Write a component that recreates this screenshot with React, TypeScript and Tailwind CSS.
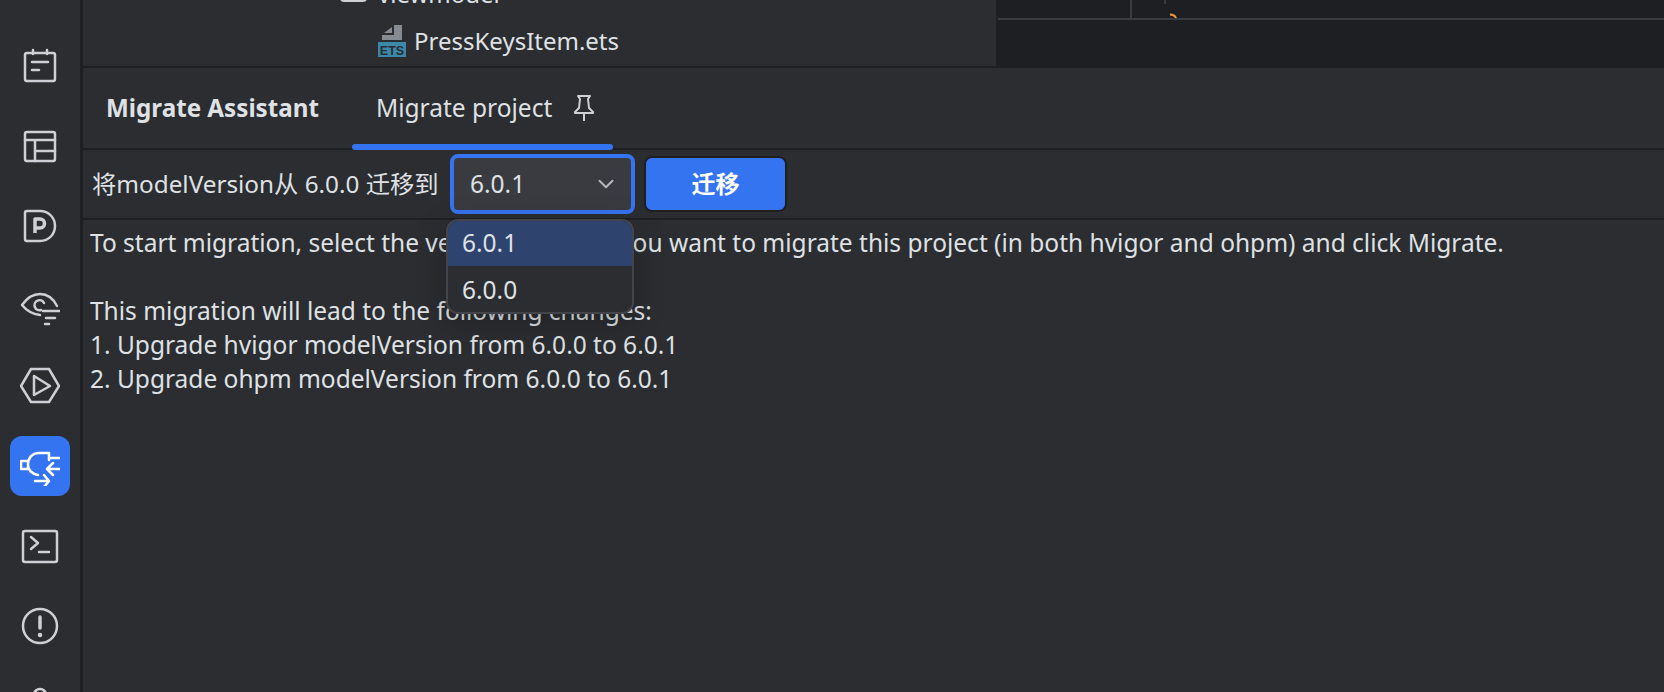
import { ChevronDown } from "lucide-react";

const font = { fontFamily: '"Noto Sans", "Noto Sans CJK SC", sans-serif' };

function RailIcon({ children, active }: { children: React.ReactNode; active?: boolean }) {
  return (
    <div className={`w-[60px] h-[60px] shrink-0 rounded-xl flex items-center justify-center ${active ? "bg-[#3574f0] text-white" : "text-[#ced0d6]"}`}>
      <svg width="40" height="40" viewBox="0 0 40 40" fill="none" stroke="currentColor" strokeWidth="2.5" strokeLinecap="round" strokeLinejoin="round">
        {children}
      </svg>
    </div>
  );
}

function Rail() {
  return (
    <div className="w-[80px] shrink-0 h-full overflow-hidden flex flex-col items-center pt-[36px] gap-[20px] bg-[#2b2d30]">
      <RailIcon>
        <rect x="5" y="7" width="30" height="28" rx="2" />
        <path d="M13 4v4M27 4v4M12 16h16M12 24h7" />
      </RailIcon>
      <RailIcon>
        <rect x="5" y="6" width="30" height="29" rx="2" />
        <path d="M5 14h30M15 14v21M15 25h20" />
      </RailIcon>
      <RailIcon>
        <path d="M7 5h13c9 0 15 7 15 15s-6 15-15 15H7a2 2 0 0 1-2-2V7a2 2 0 0 1 2-2z" />
        <path d="M15 27V13h5a4.500 4.500 0 0 1 0 9h-5" strokeWidth="3.5" strokeLinecap="butt" />
      </RailIcon>
      <RailIcon>
        <path d="M20 29C12 28 6 24 2 19 7 12 13 8 20 8c7 0 13 4 17 12" />
        <path d="M24 17a5 5 0 1 0-3 7" />
        <path d="M23 25h17M26 32h9M25 38h4" />
      </RailIcon>
      <RailIcon>
        <path d="M11 3h18l10 17-10 16H11L1 20z" />
        <path d="M14 10l16 10-16 9z" />
      </RailIcon>
      <RailIcon active>
        <path d="M8 15H1v8h7zM28 7h-9C12 7 8 12 8 19c0 5 4 9 10 10M29 7v7M29 12h11M30 23h10M33 17l-6 6 6 6M15 35h14M24 29l5 6-5 6" />
      </RailIcon>
      <RailIcon>
        <rect x="3" y="5" width="34" height="31" rx="2" />
        <path d="M11 11l7 6-7 6M19 26h10" />
      </RailIcon>
      <RailIcon>
        <circle cx="20" cy="20" r="17" />
        <path d="M20 11v11" strokeWidth="3.5" />
        <path d="M20 29v.1" strokeWidth="4.5" />
      </RailIcon>
      <RailIcon>
        <circle cx="20" cy="9" r="6" />
      </RailIcon>
    </div>
  );
}

function ProjectTree() {
  return (
    <div className="flex h-[66px] shrink-0">
      <div className="w-[913px] shrink-0 bg-[#2b2d30] overflow-hidden">
        <div className="flex items-center gap-[11px] pl-[257px] h-[20px] -mt-[16px] text-[24px] text-[#dfe1e5]">
          <span className="w-[27px] h-[16px] border-2 border-[#ced0d6] rounded-sm" />
          <span>viewmodel</span>
        </div>
        <div className="flex items-center gap-[8px] pl-[295px] pt-[20px] text-[24px] leading-[34px] text-[#dfe1e5]">
          <svg width="28" height="32" viewBox="0 0 28 32" className="shrink-0">
            <path d="M16 0h8v15H4v-5h12zM6 8l8-6v6z" fill="#868a91" />
            <rect x="0" y="17" width="28" height="15" fill="#3a88aa" />
            <text x="14" y="30" textAnchor="middle" fontSize="12.500" fontWeight="700" fill="#2b2d30" fontFamily="Liberation Sans, sans-serif">ETS</text>
          </svg>
          <span>PressKeysItem.ets</span>
        </div>
      </div>
      <div className="flex-1 bg-[#1e1f22] relative">
        <div className="h-[20px] ml-[2px] border-b-2 border-[#393b40]" />
        <div className="absolute left-[134px] top-0 w-[2px] h-[18px] bg-[#393b40]" />
        <div className="absolute left-[168px] top-0 w-[2px] h-[4px] bg-[#393b40]" />
        <svg width="8" height="5" viewBox="0 0 8 5" className="absolute left-[174px] top-[13px]">
          <path d="M0 1.500c3 0 5 1 6 3.500" fill="none" stroke="#e8963a" strokeWidth="2" />
        </svg>
      </div>
    </div>
  );
}

function Tabs() {
  return (
    <div className="h-[84px] shrink-0 flex items-stretch border-y-2 border-[#1e1f22] pl-[23px] text-[24.500px]">
      <div className="flex items-center font-bold text-[#dfe1e5] text-[24.200px] w-[246px]">Migrate Assistant</div>
      <div className="relative flex items-center gap-[20px] w-[261px] pl-[24px] text-[#dfe1e5]">
        <span>Migrate project</span>
        <svg width="24" height="28" viewBox="0 0 24 28" fill="none" stroke="#ced0d6" strokeWidth="2" strokeLinejoin="round">
          <path d="M6 2h12l-2 3 1 9 4 4v1H3v-1l4-4 1-9z" />
          <path d="M12 19v8" />
        </svg>
        <div className="absolute left-0 right-0 -bottom-[2px] h-[6px] rounded-full bg-[#3574f0]" />
      </div>
    </div>
  );
}

function Toolbar() {
  return (
    <div className="h-[70px] shrink-0 flex items-center pl-[9px] border-b-2 border-[#1e1f22] text-[24.500px] text-[#dfe1e5]">
      <span className="whitespace-nowrap w-[358px] text-[24.300px]">将modelVersion从 6.0.0 迁移到</span>
      <div className="relative">
        <div className="w-[185px] h-[60px] rounded-lg border-4 border-[#3574f0] bg-[#393b40] flex items-center justify-between pl-[16px] pr-[12px]">
          <span>6.0.1</span>
          <ChevronDown size={26} strokeWidth={1.8} className="text-[#b4b8bf]" />
        </div>
        <div className="absolute left-[-4px] top-[65px] w-[188px] h-[95px] rounded-xl border-2 border-[#43454a] bg-[#2b2d30] overflow-hidden z-10 shadow-[0_8px_30px_rgba(0,0,0,0.25)]">
          <div className="h-[45px] bg-[#2e436e] pl-[14px] flex items-center">6.0.1</div>
          <div className="h-[48px] pl-[14px] flex items-center">6.0.0</div>
        </div>
      </div>
      <button className="ml-[9px] w-[143px] h-[56px] rounded-lg bg-[#3574f0] border-2 border-[#1e1f22] text-white font-bold text-[24px]">迁移</button>
    </div>
  );
}

export default function App() {
  return (
    <div className="w-[1664px] h-[692px] overflow-hidden flex bg-[#2b2d30]" style={font}>
      <Rail />
      <div className="w-[3px] shrink-0 bg-[#1e1f22]" />
      <div className="flex-1 min-w-0 flex flex-col">
        <ProjectTree />
        <Tabs />
        <Toolbar />
        <div className="pl-[7px] pt-[6px] text-[24.500px] leading-[34px] text-[#dfe1e5] whitespace-nowrap">
          <p>To start migration, select the version to which you want to migrate this project (in both hvigor and ohpm) and click Migrate.</p>
          <p className="h-[34px]" />
          <p>This migration will lead to the following changes:</p>
          <p>1. Upgrade hvigor modelVersion from 6.0.0 to 6.0.1</p>
          <p>2. Upgrade ohpm modelVersion from 6.0.0 to 6.0.1</p>
        </div>
      </div>
    </div>
  );
}
